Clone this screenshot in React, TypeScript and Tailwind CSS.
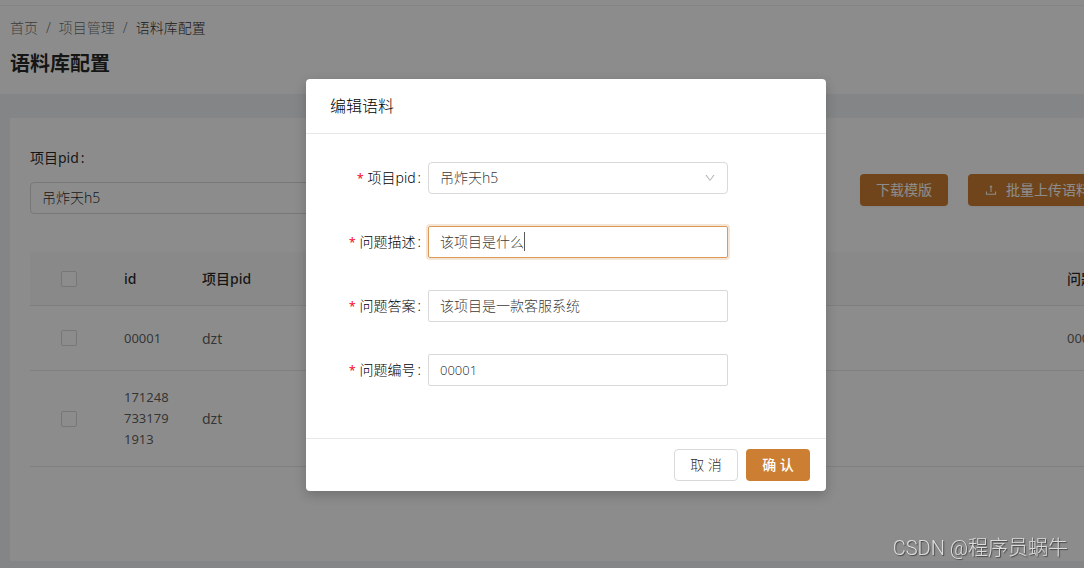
import { useState } from "react";
import type { ReactNode } from "react";

const projects = ["吊炸天h5", "dzt"];

const rows = [
    { id: "00001", pid: "dzt", code: "00001" },
    { id: "1712487331791913", pid: "dzt", code: "" },
];

function DownIcon() {
    return (
        <svg viewBox="0 0 1024 1024" className="pointer-events-none absolute right-3 top-2.5 size-3 fill-black/30" aria-hidden="true">
            <path d="M884 256h-75c-5.100 0-9.900 2.500-12.900 6.600L512 654.200 227.900 262.600c-3-4.100-7.800-6.600-12.900-6.600h-75c-6.500 0-10.300 7.400-6.500 12.700l352.600 486.100c12.800 17.600 39 17.600 51.700 0l352.600-486.100c3.900-5.300.1-12.700-6.400-12.700z" />
        </svg>
    );
}

function UploadIcon() {
    return (
        <svg viewBox="0 0 1024 1024" className="size-3.5 fill-current" aria-hidden="true">
            <path d="M400 317.700h73.900V656c0 4.400 3.600 8 8 8h60c4.400 0 8-3.600 8-8V317.700H624c6.700 0 10.400-7.700 6.300-12.900L518.300 163a8 8 0 0 0-12.600 0l-112 141.700c-4.100 5.300-.4 13 6.300 13zM878 626h-60c-4.400 0-8 3.600-8 8v154H214V634c0-4.400-3.600-8-8-8h-60c-4.400 0-8 3.600-8 8v198c0 17.700 14.300 32 32 32h684c17.700 0 32-14.300 32-32V634c0-4.400-3.600-8-8-8z" />
        </svg>
    );
}

interface FieldProps {
    id: string;
    label: string;
    children: ReactNode;
}

function Field({ id, label, children }: FieldProps) {
    return (
        <div className="flex items-center">
            <label htmlFor={id} className="w-[122px] pr-[7px] text-right text-black">
                <span className="mr-1 text-xs font-medium text-[#f5222d]">*</span>
                {label}
                <span className="ml-0.5">:</span>
            </label>
            <div className="relative w-[300px]">{children}</div>
        </div>
    );
}

function Checkbox({ label }: { label: string }) {
    return (
        <input
            type="checkbox"
            aria-label={label}
            className="block mx-auto size-4 appearance-none rounded-xs border border-[#d9d9d9] bg-white"
        />
    );
}

function EditModal() {
    const [question, setQuestion] = useState("该项目是什么");
    const [answer, setAnswer] = useState("该项目是一款客服系统");
    const [code, setCode] = useState("00001");

    return (
        <div className="absolute inset-0 flex items-start justify-center bg-black/45 pt-[79px]">
            <div
                role="dialog"
                aria-label="编辑语料"
                className="w-[520px] rounded bg-white shadow-[0_4px_12px_rgba(0,0,0,0.2)]"
            >
                <div className="border-b border-[#e8e8e8] px-6 py-4">
                    <h2 className="text-base/[22px] font-light text-black">编辑语料</h2>
                </div>
                <form className="flex flex-col gap-8 pt-7 pb-[52px] font-light">
                    <Field id="modal-pid" label="项目pid">
                        <select
                            id="modal-pid"
                            className="block h-8 w-full appearance-none rounded border border-[#d9d9d9] bg-white px-[11px] text-black/80"
                        >
                            {projects.map((p) => (
                                <option key={p}>{p}</option>
                            ))}
                        </select>
                        <DownIcon />
                    </Field>
                    <Field id="question" label="问题描述">
                        <input
                            id="question"
                            value={question}
                            onChange={(e) => setQuestion(e.target.value)}
                            className="block h-8 w-full rounded-xs border border-[#d99a57] px-[11px] pb-0.5 text-black/80 caret-transparent shadow-[0_0_0_2px_rgba(204,127,50,0.2)] outline-none"
                        />
                        <span className="absolute top-1.5 left-24 h-[19px] w-px bg-black/65" />
                    </Field>
                    <Field id="answer" label="问题答案">
                        <input
                            id="answer"
                            value={answer}
                            onChange={(e) => setAnswer(e.target.value)}
                            className="block h-8 w-full rounded-xs border border-[#d9d9d9] px-[11px] pb-0.5 text-black/80 outline-none"
                        />
                    </Field>
                    <Field id="code" label="问题编号">
                        <input
                            id="code"
                            value={code}
                            onChange={(e) => setCode(e.target.value)}
                            className="block h-8 w-full rounded-xs border border-[#d9d9d9] px-[11px] text-[13px] text-black/80 outline-none"
                        />
                    </Field>
                </form>
                <div className="flex justify-end gap-2 border-t border-[#e8e8e8] px-4 py-2.5">
                    <button type="button" className="h-8 w-16 rounded border border-[#d9d9d9] bg-white font-light text-black/85">
                        取 消
                    </button>
                    <button type="button" className="h-8 w-16 rounded bg-[#cc7f32] font-medium text-white">
                        确 认
                    </button>
                </div>
            </div>
        </div>
    );
}

export default function App() {
    return (
        <div className="overflow-hidden font-['Noto_Sans','Noto_Sans_CJK_SC',sans-serif] text-sm/[22px] text-black/65">
            <div className="relative flex min-h-screen min-w-[1132px] flex-col bg-[#f0f2f5]">
                <div className="h-1.5 border-b border-[#f0f0f0] bg-white" />
                <header className="bg-white px-2.5 pt-[11px] pb-3.5">
                    <nav className="flex gap-2 font-light text-black/60">
                        <a href="#home">首页</a>
                        <span>/</span>
                        <a href="#project">项目管理</a>
                        <span>/</span>
                        <span className="text-black/85">语料库配置</span>
                    </nav>
                    <h1 className="mt-[9px] text-xl/8 font-bold text-black/85">语料库配置</h1>
                </header>

                <main className="mt-6 mr-1.5 mb-[7px] ml-2.5 flex-1 bg-white p-5">
                    <div className="flex items-end justify-between">
                        <div className="w-[320px]">
                            <label htmlFor="filter-pid" className="block pt-[9px] pb-[13px] text-black/85">
                                项目pid<span className="ml-0.5">:</span>
                            </label>
                            <div className="relative">
                                <select
                                    id="filter-pid"
                                    className="block h-8 w-full appearance-none rounded border border-[#d9d9d9] bg-white px-[11px] font-light text-black/85"
                                >
                                    {projects.map((p) => (
                                        <option key={p}>{p}</option>
                                    ))}
                                </select>
                                <DownIcon />
                            </div>
                        </div>
                        <div className="mb-2 flex gap-5 text-white">
                            <button type="button" className="h-8 rounded bg-[#cc7f32] px-4 shadow-xs">
                                下载模版
                            </button>
                            <button type="button" className="flex h-8 items-center gap-2 rounded bg-[#cc7f32] px-4 shadow-xs">
                                <UploadIcon />
                                批量上传语料
                            </button>
                        </div>
                    </div>

                    <table className="mt-[38px] w-full table-fixed border-separate border-spacing-0 text-left text-sm/[21px]">
                        <colgroup>
                            <col className="w-[78px]" />
                            <col className="w-[78px]" />
                            <col />
                            <col className="w-[55px]" />
                        </colgroup>
                        <thead className="bg-[#fafafa] text-black/85">
                            <tr className="[&>th]:border-b [&>th]:border-[#e8e8e8] [&>th]:px-4 [&>th]:py-4 [&>th]:font-medium">
                                <th>
                                    <Checkbox label="全选" />
                                </th>
                                <th>id</th>
                                <th>项目pid</th>
                                <th className="whitespace-nowrap">问题编号</th>
                            </tr>
                        </thead>
                        <tbody>
                            {rows.map((row) => (
                                <tr key={row.id} className="[&>td]:h-[65px] [&>td]:border-b [&>td]:border-[#e8e8e8] [&>td]:px-4 [&>td]:py-4">
                                    <td>
                                        <Checkbox label={row.id} />
                                    </td>
                                    <td className="text-[13px] break-all">{row.id}</td>
                                    <td>{row.pid}</td>
                                    <td className="text-[13px]">{row.code}</td>
                                </tr>
                            ))}
                        </tbody>
                    </table>
                </main>

                <EditModal />
            </div>
            <div className="fixed right-4 bottom-1.5 font-['Roboto','Noto_Sans_CJK_SC',sans-serif] text-xl/7 font-light text-[#dcdcdc] [text-shadow:1px_1px_1px_rgba(0,0,0,0.5)]">
                CSDN @程序员蜗牛
            </div>
        </div>
    );
}
